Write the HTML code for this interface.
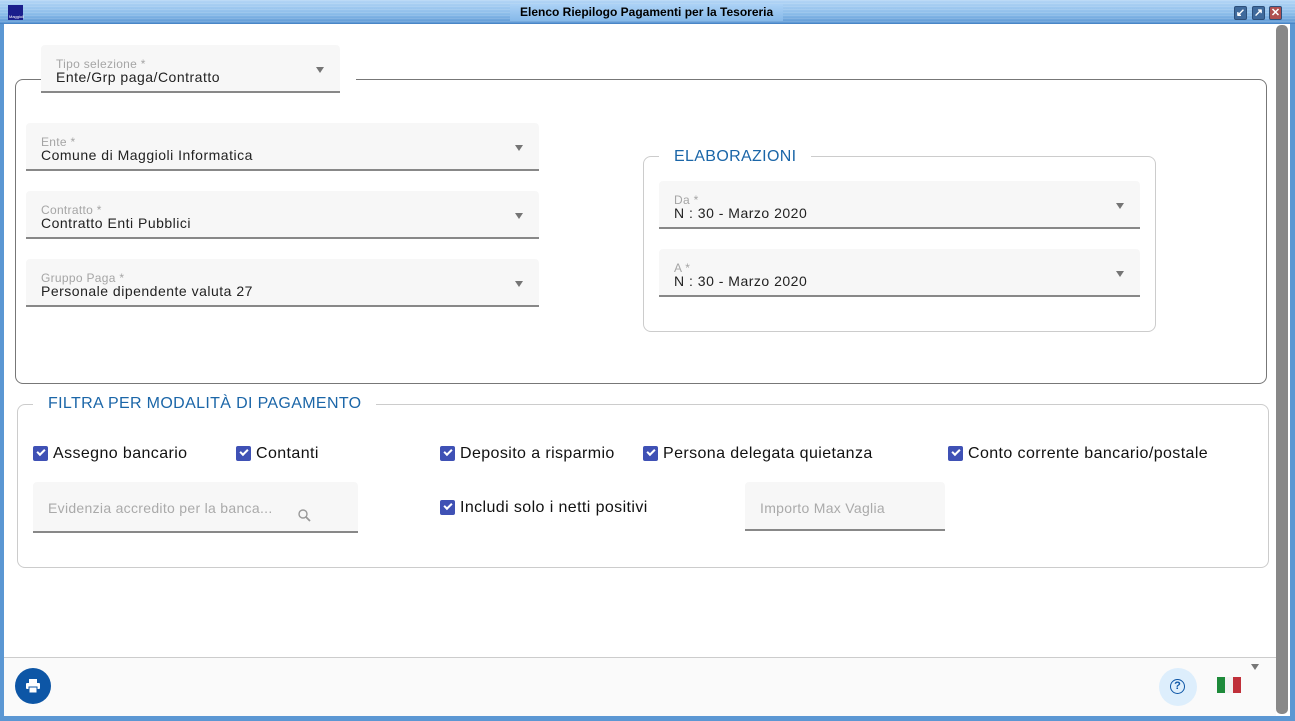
<!DOCTYPE html>
<html><head><meta charset="utf-8"><style>
*{box-sizing:border-box;margin:0;padding:0}
body{width:1295px;height:721px;position:relative;overflow:hidden;background:#fff;font-family:"Liberation Sans",Arial,sans-serif}
.abs{position:absolute}
.title{left:0;top:0;width:1295px;height:24px;background:repeating-linear-gradient(rgba(255,255,255,.12) 0 1px,rgba(0,0,0,0) 1px 3px),linear-gradient(#b4d6f6,#8cbdea 60%,#5e98d4);border-bottom:1px solid #4a86c6}
.title span{position:absolute;left:510px;top:4px;padding:0 10px;height:17px;background:linear-gradient(#acd2f6,#86b9e9);font:bold 12px "Liberation Sans",sans-serif;color:#000;line-height:17px}
.wb{width:13px;height:14px;top:6px;border:1px solid #2d4f7a;border-radius:2px;color:#fff;font:bold 11px sans-serif;text-align:center;line-height:12px}
.fld{position:absolute;background:#f7f7f7;border-radius:4px 4px 0 0;border-bottom:2px solid #888}
.fld .l{position:absolute;left:15px;top:12px;font-size:12px;color:#a5a5a5;letter-spacing:.3px}
.fld .v{position:absolute;left:15px;top:24px;font-size:14px;color:#222;letter-spacing:.5px}
.fld .a{position:absolute;right:16px;top:22px;width:0;height:0;border-left:4.5px solid transparent;border-right:4.5px solid transparent;border-top:6px solid #757575}
.fs{position:absolute;border-radius:8px}
.lg{position:absolute;background:#fff;color:#1b66a8;font-size:16px;letter-spacing:.35px;padding:0 15px}
.cb{position:absolute;font-size:16px;color:#111;height:18px;line-height:18px;padding-left:20px;letter-spacing:.4px}
.cb:before{content:"";position:absolute;left:0;top:1px;width:15px;height:15px;background:#3f51b5;border-radius:2px}
.cb:after{content:"";position:absolute;left:4px;top:4px;width:6px;height:3px;border-left:2px solid #fff;border-bottom:2px solid #fff;transform:rotate(-45deg)}
</style></head><body>
<div class="abs title"><span>Elenco Riepilogo Pagamenti per la Tesoreria</span></div>
<div class="abs" style="left:8px;top:5px;width:15px;height:15px;background:#1a1e8c"><div style="position:absolute;left:1px;bottom:1px;font-size:4px;color:#fff">Maggioli</div></div>
<div class="abs wb" style="left:1234px;background:#3f6a9c">↙</div>
<div class="abs wb" style="left:1252px;background:#3f6a9c">↗</div>
<div class="abs wb" style="left:1269px;background:#b05050">✕</div>
<div class="abs" style="left:0;top:24px;width:4px;height:697px;background:#5b97d3"></div>
<div class="abs" style="left:1290px;top:24px;width:5px;height:697px;background:#5b97d3"></div>
<div class="abs" style="left:0;top:716px;width:1295px;height:5px;background:#5b97d3"></div>
<div class="abs" style="left:1276px;top:25px;width:12px;height:689px;background:#888;border-radius:5px"></div>

<div class="fs" style="left:15px;top:79px;width:1252px;height:305px;border:1px solid #777"></div>
<div class="abs" style="left:340px;top:75px;width:16px;height:10px;background:#fff"></div>
<div class="fld" style="left:41px;top:45px;width:299px;height:48px"><div class="l">Tipo selezione *</div><div class="v">Ente/Grp paga/Contratto</div><div class="a"></div></div>

<div class="fld" style="left:26px;top:123px;width:513px;height:48px"><div class="l">Ente *</div><div class="v">Comune di Maggioli Informatica</div><div class="a"></div></div>
<div class="fld" style="left:26px;top:191px;width:513px;height:48px"><div class="l">Contratto *</div><div class="v">Contratto Enti Pubblici</div><div class="a"></div></div>
<div class="fld" style="left:26px;top:259px;width:513px;height:48px"><div class="l">Gruppo Paga *</div><div class="v">Personale dipendente valuta 27</div><div class="a"></div></div>

<div class="fs" style="left:643px;top:156px;width:513px;height:176px;border:1px solid #ccc"></div>
<div class="lg" style="left:659px;top:147px;line-height:20px">ELABORAZIONI</div>
<div class="fld" style="left:659px;top:181px;width:481px;height:48px"><div class="l">Da *</div><div class="v">N : 30 - Marzo 2020</div><div class="a"></div></div>
<div class="fld" style="left:659px;top:249px;width:481px;height:48px"><div class="l">A *</div><div class="v">N : 30 - Marzo 2020</div><div class="a"></div></div>

<div class="fs" style="left:17px;top:404px;width:1252px;height:164px;border:1px solid #ccc"></div>
<div class="lg" style="left:33px;top:394px;line-height:20px">FILTRA PER MODALITÀ DI PAGAMENTO</div>
<div class="cb" style="left:33px;top:445px">Assegno bancario</div>
<div class="cb" style="left:236px;top:445px">Contanti</div>
<div class="cb" style="left:440px;top:445px">Deposito a risparmio</div>
<div class="cb" style="left:643px;top:445px">Persona delegata quietanza</div>
<div class="cb" style="left:948px;top:445px">Conto corrente bancario/postale</div>
<div class="cb" style="left:440px;top:499px">Includi solo i netti positivi</div>
<div class="fld" style="left:33px;top:482px;width:325px;height:51px"><div class="v" style="top:18px;color:#aaa;letter-spacing:.3px">Evidenzia accredito per la banca...</div>
<svg class="abs" style="left:264px;top:26px" width="16" height="16" viewBox="0 0 16 16"><circle cx="6" cy="6" r="4" fill="none" stroke="#999" stroke-width="1.4"/><path d="M9 9l4 4" stroke="#999" stroke-width="1.8"/></svg></div>
<div class="fld" style="left:745px;top:482px;width:200px;height:49px"><div class="v" style="top:18px;color:#aaa;letter-spacing:.3px">Importo Max Vaglia</div></div>

<div class="abs" style="left:4px;top:657px;width:1272px;height:1px;background:#ccc"></div>
<div class="abs" style="left:4px;top:658px;width:1272px;height:58px;background:#fafafa"></div>
<div class="abs" style="left:15px;top:668px;width:36px;height:36px;border-radius:50%;background:#0d56a6"></div>
<svg class="abs" style="left:24px;top:677px" width="18" height="18" viewBox="0 0 18 18"><rect x="5" y="2" width="8" height="4" fill="#fff"/><rect x="2" y="6" width="14" height="6" rx="1" fill="#fff"/><rect x="5" y="10" width="8" height="6" fill="#fff" stroke="#0d56a6" stroke-width="1"/></svg>
<div class="abs" style="left:1159px;top:668px;width:38px;height:38px;border-radius:50%;background:#ddeefc"></div>
<div class="abs" style="left:1170px;top:679px;width:15px;height:15px;border:1.5px solid #0d56a6;border-radius:50%;color:#0d56a6;font:bold 11px sans-serif;text-align:center;line-height:13px">?</div>
<div class="abs" style="left:1217px;top:677px;width:24px;height:16px;background:linear-gradient(90deg,#1e8a3a 0 8px,#f2f2f2 8px 16px,#c0303a 16px)"></div>
<div class="abs" style="left:1251px;top:664px;width:0;height:0;border-left:4px solid transparent;border-right:4px solid transparent;border-top:6px solid #777"></div>
</body></html>
